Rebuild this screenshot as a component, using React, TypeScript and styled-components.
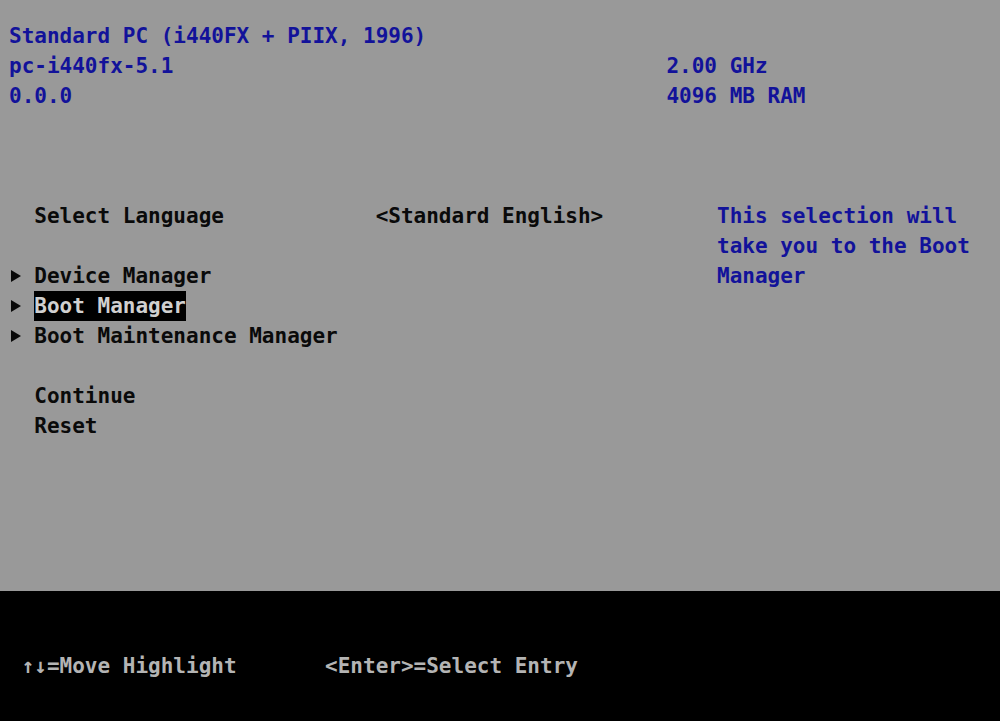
import React from "react";
import styled, { createGlobalStyle } from "styled-components";

const GlobalStyle = createGlobalStyle`
  html, body {
    margin: 0;
    padding: 0;
    background: #000;
  }
  body {
    width: 1000px;
    height: 721px;
    overflow: hidden;
  }
`;

const Screen = styled.div`
  width: 1000px;
  height: 721px;
  display: flex;
  flex-direction: column;
  font-family: "DejaVu Sans Mono", "Liberation Mono", monospace;
  font-size: 21px;
  font-weight: bold;
  line-height: 30px;
`;

const Setup = styled.main`
  height: 591px;
  box-sizing: border-box;
  padding: 21px 0 0 9px;
  background: #999999;
  color: #0a0a0a;
  display: flex;
  flex-direction: column;
`;

const SysInfo = styled.header`
  color: #12129a;
  margin-bottom: 90px;
`;

const Line = styled.div`
  height: 30px;
  display: flex;
  white-space: pre;
`;

const Cell = styled.span<{ $cols?: number }>`
  flex: none;
  width: ${({ $cols }) => ($cols ? `${$cols}ch` : "auto")};
`;

const Blank = styled.div`
  height: 30px;
`;

const Body = styled.section`
  display: grid;
  grid-template-columns: 56ch 22ch;
`;

const Menu = styled.nav`
  display: flex;
  flex-direction: column;
`;

const Marker = styled.span`
  flex: none;
  width: 2ch;
  display: flex;
  align-items: center;
  padding-left: 2px;
  box-sizing: border-box;
`;

const Item = styled.span<{ $selected?: boolean }>`
  background: ${({ $selected }) => ($selected ? "#000" : "transparent")};
  color: ${({ $selected }) => ($selected ? "#d0d0d0" : "inherit")};
`;

const Help = styled.aside`
  color: #12129a;
  white-space: normal;
`;

const KeyBar = styled.footer`
  flex: 1;
  background: #000;
  color: #b4b4b4;
  padding: 60px 0 0 9px;
`;

const Arrow = () => (
  <svg width="10" height="12" viewBox="0 0 10 12">
    <path d="M0 0 L10 6 L0 12 Z" fill="#0a0a0a" />
  </svg>
);

const entries = [
  { label: "Device Manager" },
  { label: "Boot Manager", selected: true },
  { label: "Boot Maintenance Manager" },
];

export default function App() {
  return (
    <>
      <GlobalStyle />
      <Screen>
        <Setup>
          <SysInfo>
            <Line>
              <Cell>Standard PC (i440FX + PIIX, 1996)</Cell>
            </Line>
            <Line>
              <Cell $cols={52}>pc-i440fx-5.1</Cell>
              <Cell>2.00 GHz</Cell>
            </Line>
            <Line>
              <Cell $cols={52}>0.0.0</Cell>
              <Cell>4096 MB RAM</Cell>
            </Line>
          </SysInfo>
          <Body>
            <Menu>
              <Line>
                <Marker />
                <Cell $cols={27}>Select Language</Cell>
                <Cell>&lt;Standard English&gt;</Cell>
              </Line>
              <Blank />
              {entries.map((e) => (
                <Line key={e.label}>
                  <Marker>
                    <Arrow />
                  </Marker>
                  <Item $selected={e.selected}>{e.label}</Item>
                </Line>
              ))}
              <Blank />
              <Line>
                <Marker />
                <Item>Continue</Item>
              </Line>
              <Line>
                <Marker />
                <Item>Reset</Item>
              </Line>
            </Menu>
            <Help>This selection will take you to the Boot Manager</Help>
          </Body>
        </Setup>
        <KeyBar>
          <Line>
            <Cell $cols={1} />
            <Cell $cols={24}>↑↓=Move Highlight</Cell>
            <Cell>&lt;Enter&gt;=Select Entry</Cell>
          </Line>
        </KeyBar>
      </Screen>
    </>
  );
}
